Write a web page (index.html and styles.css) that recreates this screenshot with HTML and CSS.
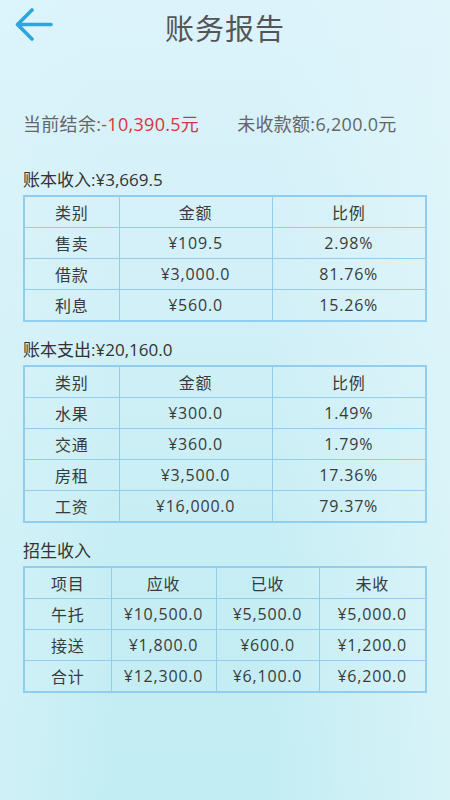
FILE: index.html
```html
<!DOCTYPE html>
<html lang="zh-CN">
<head>
    <meta charset="UTF-8">
    <meta name="viewport" content="width=device-width, initial-scale=1.0">
    <title>账务报告</title>
    <link rel="stylesheet" href="styles.css">
</head>
<body>

<div id="page">
    <div class="top-bar">
        <a class="back-btn" href="#">
            <svg width="40" height="40" viewBox="0 0 40 40">
                <path d="M36 19.5H4M17 5L2.5 19.5 17 34" fill="none" stroke="#2fa5dd" stroke-width="3.6" stroke-linecap="round" stroke-linejoin="round"/>
            </svg>
        </a>
        <h1 class="page-title">账务报告</h1>
    </div>

    <div class="summary">
        <span class="summary-item">当前结余:<span class="minus">-10,390.5元</span></span>
        <span class="summary-item">未收款额:6,200.0元</span>
    </div>

    <div class="section">
        <div class="section-title">账本收入:¥3,669.5</div>
        <table class="report">
            <colgroup>
                <col class="w-type"><col class="w-money"><col>
            </colgroup>
            <tr><td>类别</td><td>金额</td><td>比例</td></tr>
            <tr><td>售卖</td><td>¥109.5</td><td>2.98%</td></tr>
            <tr><td>借款</td><td>¥3,000.0</td><td>81.76%</td></tr>
            <tr><td>利息</td><td>¥560.0</td><td>15.26%</td></tr>
        </table>
    </div>

    <div class="section">
        <div class="section-title">账本支出:¥20,160.0</div>
        <table class="report">
            <colgroup>
                <col class="w-type"><col class="w-money"><col>
            </colgroup>
            <tr><td>类别</td><td>金额</td><td>比例</td></tr>
            <tr><td>水果</td><td>¥300.0</td><td>1.49%</td></tr>
            <tr><td>交通</td><td>¥360.0</td><td>1.79%</td></tr>
            <tr><td>房租</td><td>¥3,500.0</td><td>17.36%</td></tr>
            <tr><td>工资</td><td>¥16,000.0</td><td>79.37%</td></tr>
        </table>
    </div>

    <div class="section">
        <div class="section-title">招生收入</div>
        <table class="report">
            <colgroup>
                <col class="w-item"><col class="w-due"><col class="w-paid"><col>
            </colgroup>
            <tr><td>项目</td><td>应收</td><td>已收</td><td>未收</td></tr>
            <tr><td>午托</td><td>¥10,500.0</td><td>¥5,500.0</td><td>¥5,000.0</td></tr>
            <tr><td>接送</td><td>¥1,800.0</td><td>¥600.0</td><td>¥1,200.0</td></tr>
            <tr><td>合计</td><td>¥12,300.0</td><td>¥6,100.0</td><td>¥6,200.0</td></tr>
        </table>
    </div>
</div>

</body>
</html>
```

FILE: styles.css
```css
html, body {
    height: 100%;
}

body {
    margin: 0;
    font-family: "Open Sans", "Noto Sans CJK SC", sans-serif;
    color: #333;
    background:
        linear-gradient(90deg, rgba(220, 245, 250, 0.5) 0%, rgba(220, 245, 250, 0) 25%, rgba(220, 245, 250, 0) 60%, rgba(225, 246, 250, 0.7) 100%),
        linear-gradient(180deg, #dcf3fb 0%, #d3f0f8 35%, #c6eef4 70%, #c2edf3 100%);
}

#page {
    padding: 0 23px;
}

.top-bar {
    height: 54px;
    display: flex;
    align-items: center;
    justify-content: center;
    position: relative;
}

.back-btn {
    position: absolute;
    left: -8px;
    top: 5px;
    display: block;
    width: 40px;
    height: 40px;
}

.page-title {
    margin: 0;
    font-family: "Noto Sans CJK SC", sans-serif;
    font-size: 29px;
    font-weight: normal;
    color: #555;
    letter-spacing: 1px;
}

.summary {
    margin-top: 58px;
    display: flex;
    gap: 38px;
    font-size: 18px;
    line-height: 24px;
    letter-spacing: 0.3px;
    color: #666;
}

.minus {
    color: #d9343c;
}

.section {
    margin-top: 32px;
}

.section + .section {
    margin-top: 16px;
}

.section-title {
    font-size: 17px;
    line-height: 24px;
    color: #333;
    margin-bottom: 3px;
}

.report {
    width: 404px;
    table-layout: fixed;
    border-collapse: collapse;
    border: 2px solid #92cdee;
}

.report td {
    height: 30px;
    padding: 0;
    border: 1.5px solid #92cdee;
    text-align: center;
    font-size: 16px;
    letter-spacing: 0.8px;
    color: #3a3a3a;
}

.w-type { width: 95px; }
.w-money { width: 153px; }

.w-item { width: 87px; }
.w-due { width: 105px; }
.w-paid { width: 103px; }
```
